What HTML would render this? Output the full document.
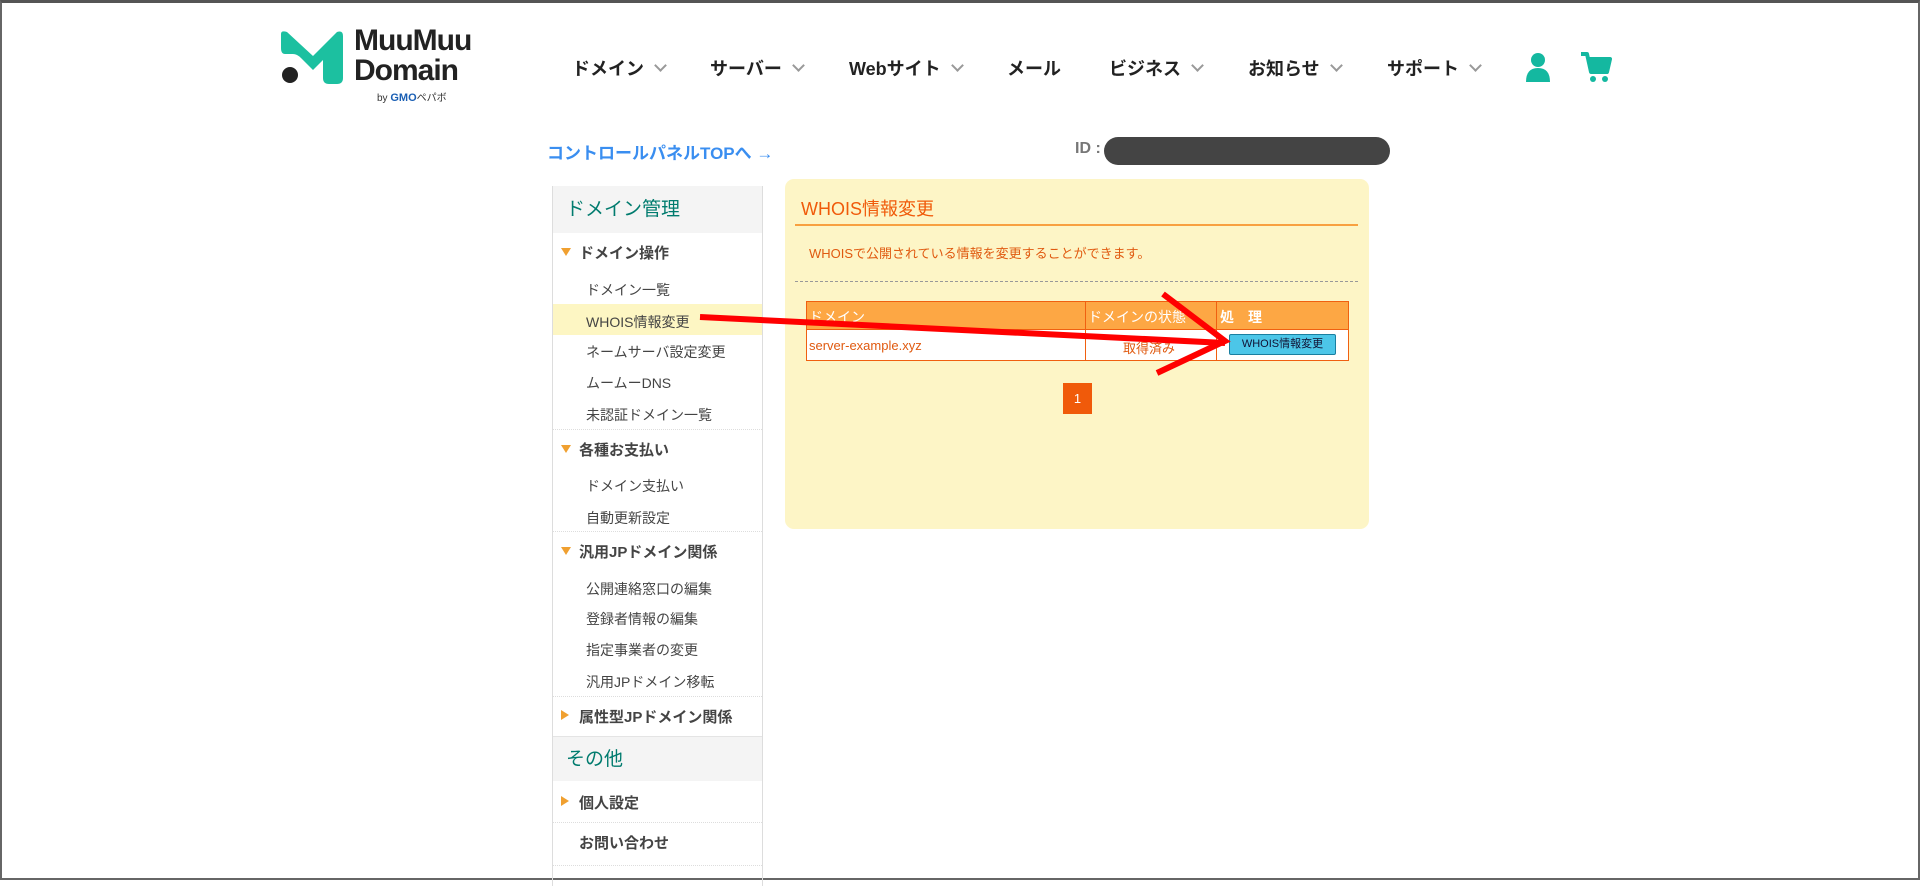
<!DOCTYPE html>
<html><head><meta charset="utf-8">
<style>
*{margin:0;padding:0;box-sizing:border-box}
body{width:1920px;height:880px;background:#fff;font-family:"Liberation Sans","Noto Sans CJK JP",sans-serif;position:relative;overflow:hidden}
.frame{position:absolute;left:0;top:0;width:1920px;height:880px;border:2px solid #666;border-top:3px solid #555}
.a{position:absolute;white-space:nowrap}
.nav{font-size:18px;font-weight:bold;color:#222;top:55px}
.chev{display:inline-block;width:9px;height:9px;border-right:2px solid #999;border-bottom:2px solid #999;transform:rotate(45deg);margin-left:12px;position:relative;top:-5px}
.side{position:absolute;left:552px;top:186px;width:211px;height:700px;border-left:1px solid #ddd;border-right:1px solid #ddd}
.sh{position:absolute;left:0;width:209px;background:#f4f4f4;color:#007b6e;font-size:19px;padding-left:13px}
.sg{position:absolute;left:26px;font-size:15px;font-weight:bold;color:#444}
.si{position:absolute;left:33px;font-size:14px;color:#444}
.tri{position:absolute;left:8px;width:0;height:0}
.down{border-left:5px solid transparent;border-right:5px solid transparent;border-top:8px solid #f0a030}
.right{border-top:5px solid transparent;border-bottom:5px solid transparent;border-left:8px solid #f0a030}
.sep{position:absolute;left:0;width:209px;border-top:1px dotted #ddd}
</style></head><body>
<div class="frame"></div>

<!-- logo -->
<svg class="a" style="left:279px;top:30px" width="80" height="56" viewBox="0 0 80 56">
<path d="M2 4 Q2 0 8 2 L34 26 L58 2 Q64 0 64 6 L64 48 Q64 54 58 54 L50 54 Q44 54 44 48 L44 30 L34 40 L22 28 Q18 24 14 24 L6 24 Q2 24 2 18Z" fill="#1cc0a0"/>
<circle cx="11" cy="45" r="8" fill="#222"/>
</svg>
<div class="a" style="left:354px;top:26px;font-size:30px;font-weight:bold;line-height:30px;color:#222;letter-spacing:-1px">MuuMuu<br>Domain</div>
<div class="a" style="left:377px;top:89px;font-size:10px;color:#333">by <b style="color:#1a5fb4;font-size:11px">GMO</b>ペパボ</div>

<div class="a nav" style="left:572px">ドメイン<span class="chev"></span></div>
<div class="a nav" style="left:710px">サーバー<span class="chev"></span></div>
<div class="a nav" style="left:849px">Webサイト<span class="chev"></span></div>
<div class="a nav" style="left:1007px">メール</div>
<div class="a nav" style="left:1109px">ビジネス<span class="chev"></span></div>
<div class="a nav" style="left:1248px">お知らせ<span class="chev"></span></div>
<div class="a nav" style="left:1387px">サポート<span class="chev"></span></div>
<svg class="a" style="left:1524px;top:52px" width="28" height="30" viewBox="0 0 28 30"><circle cx="14" cy="8" r="7" fill="#14b8a0"/><path d="M2 30 Q2 16 14 16 Q26 16 26 30Z" fill="#14b8a0"/></svg>
<svg class="a" style="left:1580px;top:50px" width="32" height="34" viewBox="0 0 32 34"><path d="M1 4 L7 4 L11 22 L27 22 L30 9 L9 9" fill="none" stroke="#14b8a0" stroke-width="4" stroke-linejoin="round"/><rect x="10" y="10" width="18" height="10" fill="#14b8a0"/><circle cx="13" cy="29" r="3" fill="#14b8a0"/><circle cx="25" cy="29" r="3" fill="#14b8a0"/></svg>

<div class="a" style="left:547px;top:139px;font-size:17px;font-weight:bold;color:#3a8ef0">コントロールパネルTOPへ →</div>
<div class="a" style="left:1075px;top:140px;font-size:16px;font-weight:bold;color:#777">ID :</div>
<div class="a" style="left:1104px;top:137px;width:286px;height:28px;border-radius:14px;background:#444"></div>

<!-- sidebar -->
<div class="side">
 <div class="sh" style="top:0;height:47px;line-height:47px">ドメイン管理</div>
 <div class="tri down" style="top:62px"></div><div class="sg" style="top:56px">ドメイン操作</div>
 <div class="si" style="top:94px">ドメイン一覧</div>
 <div style="position:absolute;left:0;top:118px;width:209px;height:31px;background:#fdf6c3"></div>
 <div class="si" style="top:126px">WHOIS情報変更</div>
 <div class="si" style="top:156px">ネームサーバ設定変更</div>
 <div class="si" style="top:187px">ムームーDNS</div>
 <div class="si" style="top:219px">未認証ドメイン一覧</div>
 <div class="sep" style="top:243px"></div>
 <div class="tri down" style="top:259px"></div><div class="sg" style="top:253px">各種お支払い</div>
 <div class="si" style="top:290px">ドメイン支払い</div>
 <div class="si" style="top:322px">自動更新設定</div>
 <div class="sep" style="top:345px"></div>
 <div class="tri down" style="top:361px"></div><div class="sg" style="top:355px">汎用JPドメイン関係</div>
 <div class="si" style="top:393px">公開連絡窓口の編集</div>
 <div class="si" style="top:423px">登録者情報の編集</div>
 <div class="si" style="top:454px">指定事業者の変更</div>
 <div class="si" style="top:486px">汎用JPドメイン移転</div>
 <div class="sep" style="top:510px"></div>
 <div class="tri right" style="top:524px"></div><div class="sg" style="top:520px">属性型JPドメイン関係</div>
 <div class="sh" style="top:550px;height:45px;line-height:45px;border-top:1px solid #e4e4e4">その他</div>
 <div class="tri right" style="top:610px"></div><div class="sg" style="top:606px">個人設定</div>
 <div class="sep" style="top:636px"></div>
 <div class="sg" style="top:646px">お問い合わせ</div>
 <div class="sep" style="top:679px"></div>
</div>

<!-- main panel -->
<div class="a" style="left:785px;top:179px;width:584px;height:350px;background:#fdf5c6;border-radius:9px"></div>
<div class="a" style="left:801px;top:195px;font-size:18px;color:#f05a0a">WHOIS情報変更</div>
<div class="a" style="left:795px;top:224px;width:563px;height:2px;background:#f8a040"></div>
<div class="a" style="left:809px;top:243px;font-size:13px;color:#e05a10">WHOISで公開されている情報を変更することができます。</div>
<div class="a" style="left:795px;top:281px;width:563px;border-top:1px dashed #999"></div>
<div class="a" style="left:806px;top:301px;width:543px;height:60px;border:1px solid #f06010;background:#fff"></div>
<div class="a" style="left:807px;top:302px;width:541px;height:28px;background:#fda744;border-bottom:1px solid #f06010"></div>
<div class="a" style="left:1085px;top:302px;width:1px;height:58px;background:#f06010"></div>
<div class="a" style="left:1216px;top:302px;width:1px;height:58px;background:#f06010"></div>
<div class="a" style="left:809px;top:307px;font-size:14px;color:#fff">ドメイン</div>
<div class="a" style="left:1088px;top:307px;font-size:14px;color:#fff">ドメインの状態</div>
<div class="a" style="left:1220px;top:307px;font-size:14px;color:#fff;font-weight:bold">処　理</div>
<div class="a" style="left:809px;top:338px;font-size:13px;color:#e05a10">server-example.xyz</div>
<div class="a" style="left:1123px;top:338px;font-size:13px;color:#e05a10">取得済み</div>
<div class="a" style="left:1229px;top:334px;width:107px;height:21px;background:#4cc6e8;border:1px solid #1a7fa0;border-radius:2px;font-size:11px;color:#113;text-align:center;line-height:19px">WHOIS情報変更</div>
<div class="a" style="left:1063px;top:383px;width:29px;height:31px;background:#f05a0a;color:#fff;font-size:13px;text-align:center;line-height:31px">1</div>

<!-- red arrow -->
<svg class="a" style="left:0;top:0" width="1920" height="880">
<path d="M700 317 L1225 343" stroke="#f00" stroke-width="6" fill="none"/>
<path d="M1163 294 L1225 341 L1157 373" stroke="#f00" stroke-width="6" fill="none" stroke-linejoin="miter"/>
</svg>
</body></html>
